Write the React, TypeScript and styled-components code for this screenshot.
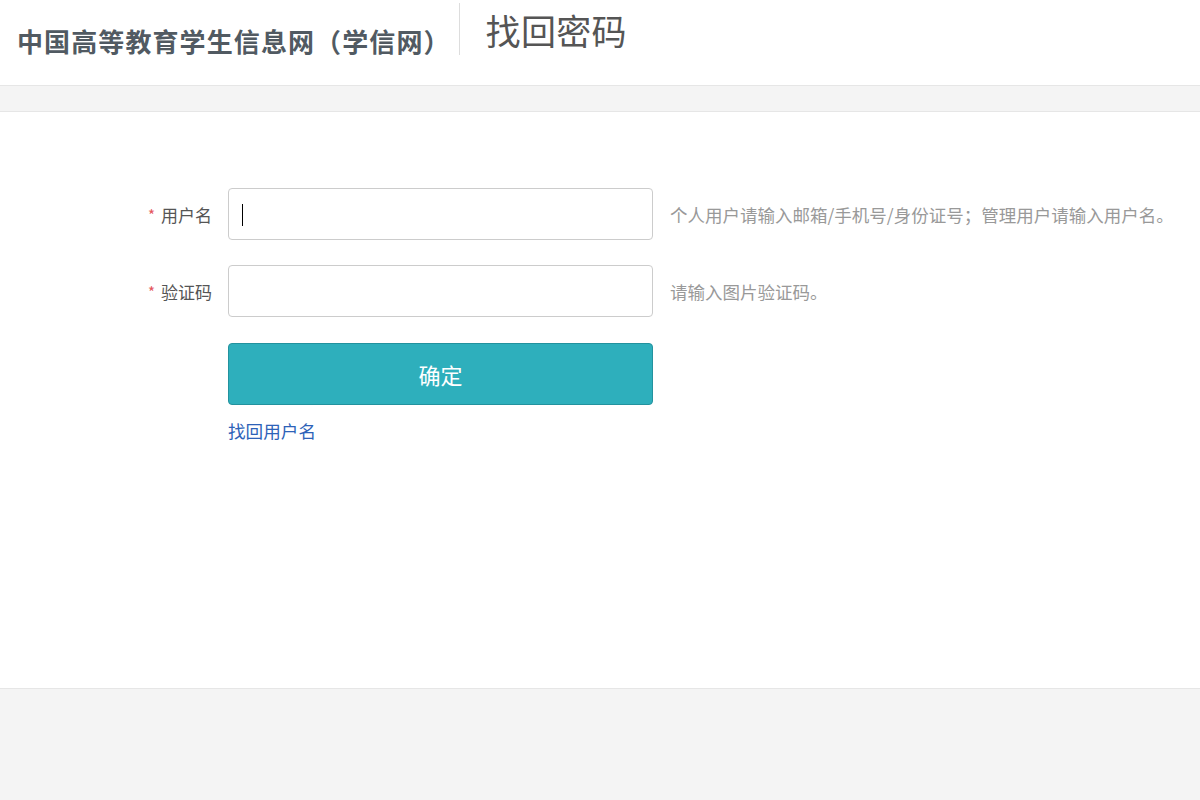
import React from "react";
import styled, { createGlobalStyle } from "styled-components";

const GlobalStyle = createGlobalStyle`
  html, body {
    margin: 0;
    padding: 0;
    background: #f4f4f4;
    font-family: "Noto Sans CJK SC", "Noto Sans", sans-serif;
  }
  * { box-sizing: border-box; }
`;

const Page = styled.div`
  display: flex;
  flex-direction: column;
  min-height: 800px;
  background: #f4f4f4;
`;

const Header = styled.header`
  height: 85px;
  background: #fff;
  display: flex;
  align-items: flex-start;
  padding-left: 17px;
`;

const Logo = styled.div`
  margin-top: 23px;
  font-size: 26px;
  line-height: 36px;
  font-weight: 700;
  letter-spacing: 1.1px;
  color: #515a62;
  white-space: nowrap;
`;

const Divider = styled.div`
  width: 1px;
  height: 52px;
  margin-top: 3px;
  margin-left: 8px;
  background: #dddddd;
`;

const Title = styled.h1`
  margin: 6px 0 0 26px;
  font-size: 35px;
  line-height: 48px;
  font-weight: 400;
  color: #555;
  letter-spacing: 0.3px;
`;

const Band = styled.div`
  height: 27px;
  background: #f4f4f4;
  border-top: 1px solid #e6e6e6;
  border-bottom: 1px solid #e6e6e6;
`;

const Main = styled.main`
  background: #fff;
  height: 577px;
  border-bottom: 1px solid #e6e6e6;
  padding-top: 76px;
`;

const Form = styled.form`
  display: grid;
  grid-template-columns: 212px 425px 1fr;
  column-gap: 16px;
  row-gap: 25px;
  align-items: center;
`;

const Label = styled.label`
  justify-self: end;
  font-size: 17px;
  color: #555;
  display: flex;
  align-items: center;
  gap: 6px;
`;

const Star = styled.span`
  color: #e4555d;
  font-size: 15px;
`;

const Field = styled.div`
  position: relative;
  width: 425px;
  height: 52px;
`;

const Input = styled.input`
  height: 52px;
  width: 425px;
  border: 1px solid #cccccc;
  border-radius: 4px;
  padding: 0 13px;
  font-size: 18px;
  font-family: inherit;
  color: #333;
  outline: none;
`;

const Caret = styled.span`
  position: absolute;
  left: 14px;
  top: 16px;
  width: 1px;
  height: 22px;
  background: #000;
  pointer-events: none;
`;

const Hint = styled.span`
  font-size: 17.5px;
  color: #999;
  padding-left: 1px;
  white-space: nowrap;
`;

const Spacer = styled.span``;

const ActionCol = styled.div`
  display: flex;
  flex-direction: column;
  align-items: flex-start;
  margin-top: 1px;
`;

const Submit = styled.button`
  width: 425px;
  height: 62px;
  background: #2eafbc;
  border: 1px solid #23929e;
  border-radius: 4px;
  color: #fff;
  font-size: 22px;
  font-family: inherit;
  cursor: pointer;
`;

const LinkText = styled.a`
  margin-top: 13px;
  font-size: 17.6px;
  color: #2d62b8;
  text-decoration: none;
`;

export default function App() {
  return (
    <Page>
      <GlobalStyle />
      <Header>
        <Logo>中国高等教育学生信息网（学信网）</Logo>
        <Divider />
        <Title>找回密码</Title>
      </Header>
      <Band />
      <Main>
        <Form onSubmit={(e) => e.preventDefault()}>
          <Label htmlFor="username">
            <Star>*</Star>用户名
          </Label>
          <Field>
            <Input id="username" />
            <Caret />
          </Field>
          <Hint>个人用户请输入邮箱/手机号/身份证号；管理用户请输入用户名。</Hint>

          <Label htmlFor="captcha">
            <Star>*</Star>验证码
          </Label>
          <Field>
            <Input id="captcha" />
          </Field>
          <Hint>请输入图片验证码。</Hint>

          <Spacer />
          <ActionCol>
            <Submit type="submit">确定</Submit>
            <LinkText href="#">找回用户名</LinkText>
          </ActionCol>
          <Spacer />
        </Form>
      </Main>
    </Page>
  );
}
